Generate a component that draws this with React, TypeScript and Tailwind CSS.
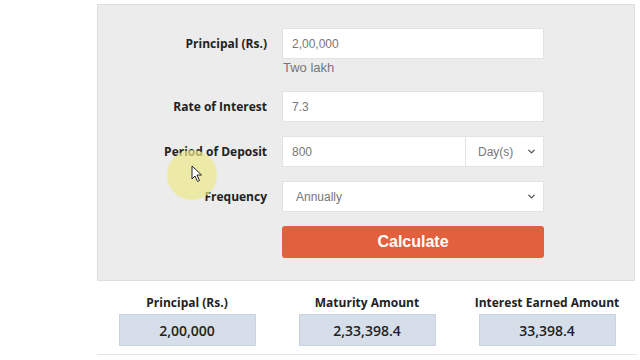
import { ChevronDown } from "lucide-react";

const labelCls = "w-[184px] pr-[15px] text-right text-[12px] font-bold text-[#222]";
const inputCls =
  "h-[31px] bg-white border border-[#e2e2e2] flex items-center text-[12px] text-[#777] font-['Liberation_Sans',Arial,sans-serif]";

const results = [
  { label: "Principal (Rs.)", value: "2,00,000" },
  { label: "Maturity Amount", value: "2,33,398.4" },
  { label: "Interest Earned Amount", value: "33,398.4" },
];

export default function App() {
  return (
    <div className="relative w-[640px] h-[360px] overflow-hidden bg-white font-['Open_Sans',sans-serif]">
      <div className="ml-[97px] mt-[4px] w-[538px] h-[277px] bg-[#ececec] border border-[#dedede] pt-[23px]">
        {/* principal */}
        <div className="flex items-start">
          <div className={`${labelCls} h-[31px] flex items-center justify-end`}>Principal (Rs.)</div>
          <div className="w-[262px]">
            <div className={`${inputCls} pl-[9px]`}>2,00,000</div>
            <div className="h-[18px] pl-[1px] flex items-center text-[13px] text-[#777] font-['Liberation_Sans',Arial,sans-serif]">
              Two lakh
            </div>
          </div>
        </div>

        {/* rate */}
        <div className="flex items-center mt-[14px]">
          <div className={labelCls}>Rate of Interest</div>
          <div className={`${inputCls} w-[262px] pl-[9px]`}>7.3</div>
        </div>

        {/* period */}
        <div className="flex items-center mt-[14px]">
          <div className={labelCls}>Period of Deposit</div>
          <div className="flex w-[262px]">
            <div className={`${inputCls} flex-1 pl-[9px]`}>800</div>
            <div className={`${inputCls} w-[78px] border-l-0 pl-[12px] pr-[6px] justify-between`}>
              <span>Day(s)</span>
              <ChevronDown className="w-[11px] h-[11px] text-[#555]" strokeWidth={3} />
            </div>
          </div>
        </div>

        {/* frequency */}
        <div className="flex items-center mt-[14px]">
          <div className={labelCls}>Frequency</div>
          <div className={`${inputCls} w-[262px] pl-[13px] pr-[6px] justify-between`}>
            <span>Annually</span>
            <ChevronDown className="w-[11px] h-[11px] text-[#555]" strokeWidth={3} />
          </div>
        </div>

        {/* button */}
        <div className="flex mt-[14px]">
          <div className="w-[184px]" />
          <button className="w-[262px] h-[32px] rounded-[3px] bg-[#e2603d] text-white text-[16px] font-bold font-['Liberation_Sans',Arial,sans-serif]">
            Calculate
          </button>
        </div>
      </div>

      {/* results */}
      <div className="ml-[97px] w-[540px] grid grid-cols-3 pt-[13px] pb-[8px] border-b border-[#e4e4e4]">
        {results.map((r) => (
          <div key={r.label} className="flex flex-col items-center">
            <div className="h-[17px] leading-[17px] text-[12px] font-bold text-[#222]">{r.label}</div>
            <div className="mt-[3px] w-[137px] h-[32px] bg-[#d6deea] border border-[#c9d2df] flex items-center justify-center text-[14px] font-semibold text-[#222]">
              {r.value}
            </div>
          </div>
        ))}
      </div>

      {/* cursor highlight */}
      <div className="absolute left-[167px] top-[150px] w-[50px] h-[50px] rounded-full bg-[#eeea8c]/70" />
      <svg className="absolute left-[191px] top-[165px]" width="12" height="18" viewBox="0 0 12 18">
        <path d="M1 1 L1 14 L4 11 L6.5 16.5 L8.5 15.5 L6 10 L10.5 10 Z" fill="white" stroke="#222" strokeWidth="1" strokeLinejoin="round" />
      </svg>
    </div>
  );
}
